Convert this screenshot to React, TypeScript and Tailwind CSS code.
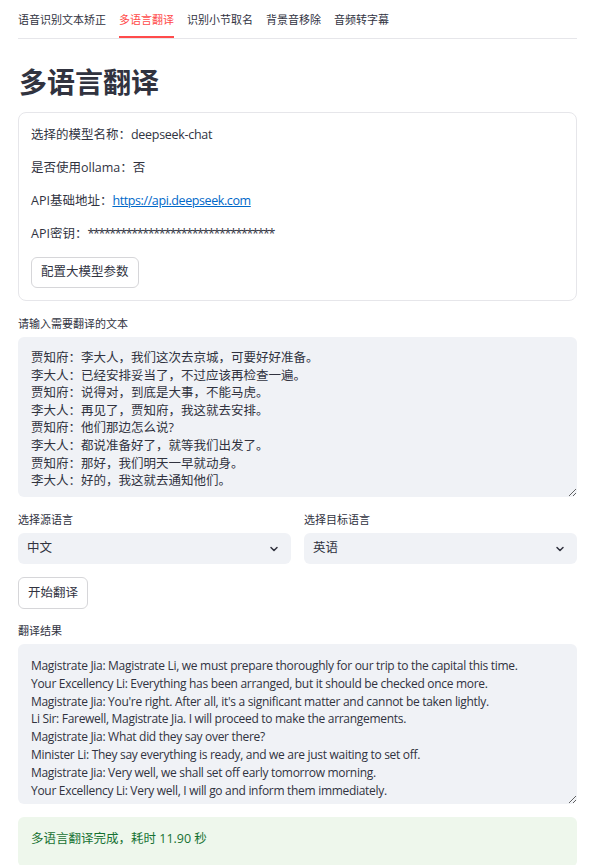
import React from 'react';

const tabs = ['语音识别文本矫正', '多语言翻译', '识别小节取名', '背景音移除', '音频转字幕'];

const sourceText = [
  '贾知府：李大人，我们这次去京城，可要好好准备。',
  '李大人：已经安排妥当了，不过应该再检查一遍。',
  '贾知府：说得对，到底是大事，不能马虎。',
  '李大人：再见了，贾知府，我这就去安排。',
  '贾知府：他们那边怎么说?',
  '李大人：都说准备好了，就等我们出发了。',
  '贾知府：那好，我们明天一早就动身。',
  '李大人：好的，我这就去通知他们。',
].join('\n');

const resultText = [
  'Magistrate Jia: Magistrate Li, we must prepare thoroughly for our trip to the capital this time.',
  'Your Excellency Li: Everything has been arranged, but it should be checked once more.',
  "Magistrate Jia: You're right. After all, it's a significant matter and cannot be taken lightly.",
  'Li Sir: Farewell, Magistrate Jia. I will proceed to make the arrangements.',
  'Magistrate Jia: What did they say over there?',
  'Minister Li: They say everything is ready, and we are just waiting to set off.',
  'Magistrate Jia: Very well, we shall set off early tomorrow morning.',
  'Your Excellency Li: Very well, I will go and inform them immediately.',
].join('\n');

const Chevron = () => (
  <svg width="12" height="12" viewBox="0 0 24 24" fill="none" stroke="#31333f" strokeWidth="3" strokeLinecap="round" strokeLinejoin="round">
    <path d="M6 9l6 6 6-6" />
  </svg>
);

const Select: React.FC<{ label: string; value: string }> = ({ label, value }) => (
  <div className="flex-1 min-w-0">
    <div className="text-[11px] leading-[16px] text-[#31333f]">{label}</div>
    <div className="mt-[5px] h-[31px] rounded-md bg-[#f0f2f6] flex items-center justify-between pl-[9px] pr-[11px] text-[12.5px] text-[#31333f]">
      <span>{value}</span>
      <Chevron />
    </div>
  </div>
);

export default function App() {
  return (
    <div className="w-[591px] min-h-[865px] bg-white text-[#31333f] font-['Open_Sans','Noto_Sans_CJK_SC',sans-serif] pl-[18px] pr-[14px] overflow-hidden">
      {/* tabs */}
      <div className="flex gap-[13px] pt-[12px] border-b border-[#e6e6ea]">
        {tabs.map((t, i) => (
          <div
            key={t}
            className={`h-[26px] text-[11px] leading-[16px] whitespace-nowrap ${
              i === 1 ? 'text-[#ff4b4b] border-b-2 border-[#ff4b4b] -mb-px' : 'text-[#31333f]'
            }`}
          >
            {t}
          </div>
        ))}
      </div>

      <h1 className="mt-[26px] text-[28px] leading-[34px] font-bold pl-px">多语言翻译</h1>

      {/* config card */}
      <div className="mt-[13px] border border-[#e6e6ea] rounded-lg px-[12px] pt-[12px] pb-[12px] text-[12.5px]">
        <div className="flex flex-col gap-[13px]">
          <div className="leading-[20px]">
            选择的模型名称：<span className="tracking-[-0.3px]">deepseek-chat</span>
          </div>
          <div className="leading-[20px]">是否使用ollama：否</div>
          <div className="leading-[20px]">
            API基础地址：<span className="text-[#0068c9] underline tracking-[-0.4px]">https://api.deepseek.com</span>
          </div>
          <div className="leading-[20px]">
            API密钥：<span className="tracking-[-1.4px]">**********************************</span>
          </div>
        </div>
        <button className="mt-[13px] h-[31px] px-[9px] rounded-md border border-[#d6d6d9] bg-white text-[12.5px] text-[#31333f]">
          配置大模型参数
        </button>
      </div>

      {/* source text */}
      <div className="mt-[15px] text-[11px] leading-[16px]">请输入需要翻译的文本</div>
      <textarea
        readOnly
        defaultValue={sourceText}
        className="mt-[5px] block w-full h-[160px] rounded-md bg-[#f0f2f6] px-[13px] pt-[12px] text-[12.5px] leading-[17.6px] text-[#31333f] resize-y outline-none"
      />

      {/* language selects */}
      <div className="mt-[15px] flex gap-[13px]">
        <Select label="选择源语言" value="中文" />
        <Select label="选择目标语言" value="英语" />
      </div>

      <button className="mt-[13px] h-[32px] px-[9px] rounded-md border border-[#d6d6d9] bg-white text-[12.5px] text-[#31333f]">
        开始翻译
      </button>

      {/* result */}
      <div className="mt-[14px] text-[11px] leading-[16px]">翻译结果</div>
      <textarea
        readOnly
        defaultValue={resultText}
        className="mt-[5px] block w-full h-[160px] rounded-md bg-[#f0f2f6] px-[13px] pt-[13px] text-[12px] leading-[17.8px] tracking-[-0.3px] text-[#31333f] resize-y outline-none"
      />

      <div className="mt-[13px] rounded-md bg-[#eef7ec] px-[13px] pt-[13px] pb-[20px] text-[12.5px] leading-[17px] text-[#177233]">
        多语言翻译完成，耗时 11.90 秒
      </div>
    </div>
  );
}
